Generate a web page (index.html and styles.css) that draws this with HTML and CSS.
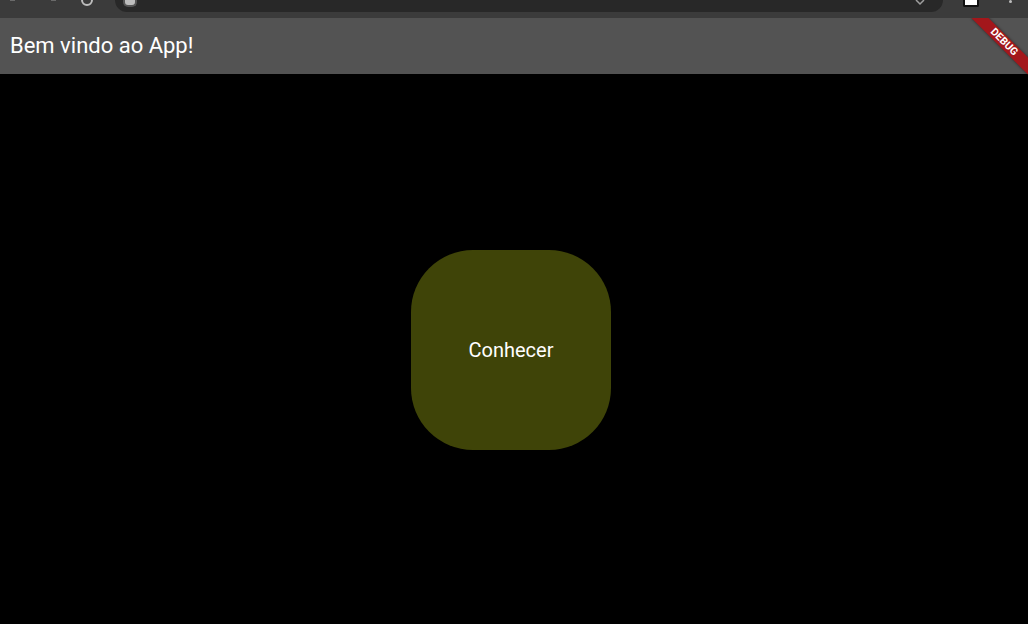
FILE: index.html
```html
<!DOCTYPE html>
<html lang="pt">
<head>
<meta charset="utf-8">
<title>Bem vindo ao App!</title>
<link rel="stylesheet" href="styles.css">
</head>
<body>
<div class="chrome">
  <div class="nav">
    <svg class="nav-icon" width="14" height="6" viewBox="0 0 14 6"><path d="M2 0 L7 0" stroke="#6a6a6a" stroke-width="2"/></svg>
    <svg class="nav-icon" width="14" height="6" viewBox="0 0 14 6"><path d="M7 0 L12 0" stroke="#6a6a6a" stroke-width="2"/></svg>
    <svg class="nav-icon" width="14" height="6" viewBox="0 0 14 6"><path d="M2 0 A5 5 0 0 0 12 0" fill="none" stroke="#bdbdbd" stroke-width="2"/></svg>
  </div>
  <div class="urlbar">
    <span class="site-dot"></span>
    <span class="spacer"></span>
    <svg width="14" height="6" viewBox="0 0 14 6"><path d="M3 0 L7 4 L11 0" fill="none" stroke="#9e9e9e" stroke-width="1.5"/></svg>
  </div>
  <div class="actions">
    <span class="ext"></span>
    <span class="menu-dot"></span>
  </div>
</div>
<div class="app">
  <header class="appbar">
    <h1 class="title">Bem vindo ao App!</h1>
  </header>
  <main class="content">
    <button class="btn">Conhecer</button>
  </main>
  <div class="banner">DEBUG</div>
</div>
</body>
</html>
```
FILE: styles.css
```css
* { box-sizing: border-box; }
html, body {
  margin: 0;
  padding: 0;
  width: 1028px;
  height: 624px;
  overflow: hidden;
  background: #000;
  font-family: Roboto, "Liberation Sans", sans-serif;
}
.chrome {
  height: 18px;
  background: #3b3b3b;
  display: flex;
  align-items: flex-start;
}
.nav {
  width: 115px;
  display: flex;
  gap: 22px;
  padding-left: 8px;
}
.nav-icon { display: block; }
.urlbar {
  width: 828px;
  height: 12px;
  background: #282828;
  border-radius: 0 0 12px 12px;
  display: flex;
  align-items: flex-start;
  padding: 0 16px 0 8px;
}
.site-dot {
  width: 10px;
  height: 5px;
  background: #bdbdbd;
  border-radius: 0 0 5px 5px;
  border: 2px solid #555;
  border-top: none;
  box-sizing: content-box;
}
.spacer { flex: 1; }
.actions {
  flex: 1;
  display: flex;
  align-items: flex-start;
  padding-left: 20px;
  gap: 30px;
}
.ext {
  width: 12px;
  height: 5px;
  background: #fff;
  border-radius: 0 0 2px 2px;
  border: 2px solid #111;
  border-top: none;
  box-sizing: content-box;
}
.menu-dot {
  width: 3px;
  height: 3px;
  background: #bdbdbd;
  border-radius: 50%;
}
.app {
  position: relative;
  height: 606px;
  overflow: hidden;
  display: flex;
  flex-direction: column;
}
.appbar {
  height: 56px;
  background: #535353;
  display: flex;
  align-items: center;
  padding-left: 10px;
  padding-bottom: 1px;
  box-shadow: 0 1px 3px rgba(0,0,0,0.4);
}
.title {
  margin: 0;
  font-size: 22px;
  font-weight: 400;
  color: #fff;
  letter-spacing: 0;
}
.content {
  flex: 1;
  display: flex;
  align-items: center;
  justify-content: center;
  padding-top: 2px;
  padding-right: 6px;
}
.btn {
  width: 200px;
  height: 200px;
  border: none;
  border-radius: 62px;
  background: #3f4408;
  color: #fff;
  font-family: Roboto, "Liberation Sans", sans-serif;
  font-size: 20px;
  font-weight: 400;
  padding: 0;
  margin-top: 0;
}
.banner {
  position: absolute;
  left: 964px;
  top: 18px;
  width: 80px;
  height: 12px;
  transform: rotate(45deg);
  background: #a3171b;
  color: #fff;
  font-family: Roboto, "Liberation Sans", sans-serif;
  font-size: 10.5px;
  font-weight: 700;
  line-height: 12px;
  text-align: center;
  letter-spacing: 0;
  box-shadow: 0 0 3px rgba(0,0,0,0.5);
}
```
